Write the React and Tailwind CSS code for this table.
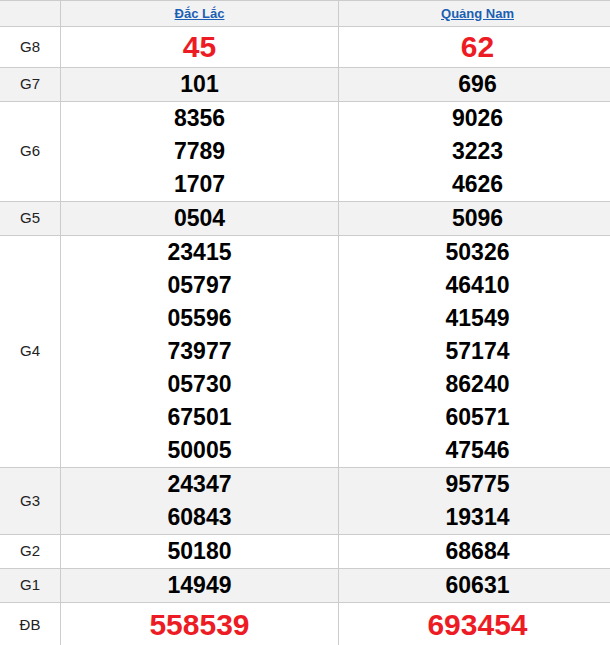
import React from 'react';

const rows = [
  { label: 'G8', a: ['45'], b: ['62'], big: true },
  { label: 'G7', a: ['101'], b: ['696'] },
  { label: 'G6', a: ['8356', '7789', '1707'], b: ['9026', '3223', '4626'] },
  { label: 'G5', a: ['0504'], b: ['5096'] },
  {
    label: 'G4',
    a: ['23415', '05797', '05596', '73977', '05730', '67501', '50005'],
    b: ['50326', '46410', '41549', '57174', '86240', '60571', '47546'],
  },
  { label: 'G3', a: ['24347', '60843'], b: ['95775', '19314'] },
  { label: 'G2', a: ['50180'], b: ['68684'] },
  { label: 'G1', a: ['14949'], b: ['60631'] },
  { label: 'ĐB', a: ['558539'], b: ['693454'], big: true, special: true },
];

const NumberCell = ({ values, big, special }) => (
  <div className="flex flex-col items-center justify-center border-r border-b border-[#cccccc]">
    {values.map((v, i) =>
      big ? (
        <div
          key={i}
          className={`${special ? 'h-[44px] leading-[44px]' : 'h-[40px] leading-[40px]'} text-[30px] font-bold text-[#ed1c24]`}
        >
          {v}
        </div>
      ) : (
        <div key={i} className="h-[33px] leading-[33px] text-[23px] font-bold text-black">
          {v}
        </div>
      )
    )}
  </div>
);

export default function App() {
  return (
    <div className="w-[610px] overflow-hidden bg-white">
      <div
        className="w-[617px] border-t border-[#cccccc]"
        style={{ fontFamily: '"Liberation Sans", Arial, sans-serif' }}
      >
        {/* Header */}
        <div className="grid grid-cols-[61px_278px_278px] bg-[#f2f2f2]">
          <div className="h-[26px] border-r border-b border-[#cccccc]" />
          <div className="h-[26px] flex items-center justify-center border-r border-b border-[#cccccc]">
            <a href="#" className="text-[13px] font-bold text-[#1a5fb4] underline">
              Đắc Lắc
            </a>
          </div>
          <div className="h-[26px] flex items-center justify-center border-r border-b border-[#cccccc]">
            <a href="#" className="text-[13px] font-bold text-[#1a5fb4] underline">
              Quảng Nam
            </a>
          </div>
        </div>

        {/* Prize rows */}
        {rows.map((row, idx) => (
          <div
            key={row.label}
            className={`grid grid-cols-[61px_278px_278px] ${idx % 2 === 1 ? 'bg-[#f2f2f2]' : 'bg-white'}`}
          >
            <div className="flex items-center justify-center border-r border-b border-[#cccccc] text-[15px] text-[#222222]">
              {row.label}
            </div>
            <NumberCell values={row.a} big={row.big} special={row.special} />
            <NumberCell values={row.b} big={row.big} special={row.special} />
          </div>
        ))}
      </div>
    </div>
  );
}
